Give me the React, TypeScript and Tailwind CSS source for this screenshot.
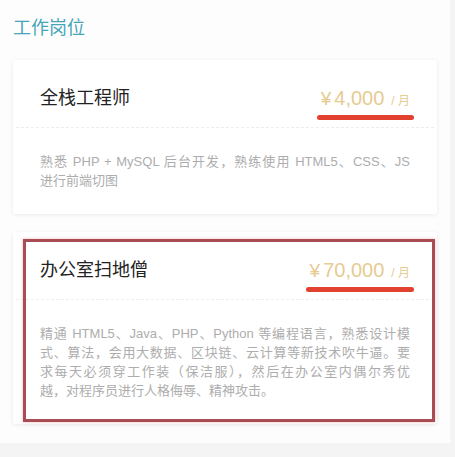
import React from 'react';

interface Job {
  title: string;
  salary: string;
  lines: string[];
  marked?: boolean;
}

const jobs: Job[] = [
  {
    title: '全栈工程师',
    salary: '4,000',
    lines: ['熟悉 PHP + MySQL 后台开发，熟练使用 HTML5、CSS、JS', '进行前端切图'],
  },
  {
    title: '办公室扫地僧',
    salary: '70,000',
    lines: [
      '精通 HTML5、Java、PHP、Python 等编程语言，熟悉设计模',
      '式、算法，会用大数据、区块链、云计算等新技术吹牛逼。要',
      '求每天必须穿工作装（保洁服），然后在办公室内偶尔秀优',
      '越，对程序员进行人格侮辱、精神攻击。',
    ],
    marked: true,
  },
];

const font = 'font-["Liberation_Sans","Noto_Sans_CJK_SC",sans-serif]';

const JobCard = ({ job }: { job: Job }) => (
  <div className="relative bg-white rounded-[3px] shadow-[0_1px_4px_rgba(0,0,0,0.08)]">
    <div className="flex justify-between items-start px-[27px] pt-[26px] h-[67px]">
      <div className="text-[18px] leading-[24px] text-[#222]">{job.title}</div>
      <div className="flex flex-col">
        <div className="flex items-baseline leading-[24px] text-[#e6cb92]">
          <span className="text-[19px]">¥</span>
          <span className="text-[20px] ml-[3px]">{job.salary}</span>
          <span className="text-[12px] ml-[7px]">/ 月</span>
        </div>
        <div className="mt-[2px] -mx-[4px] h-[5px] rounded-full bg-[#e2412f]" />
      </div>
    </div>
    <div className="mx-[3px] border-t border-dashed border-[#ededed]" />
    <div className="px-[27px] pt-[24px] pb-[24px] text-[13px] leading-[19px] text-[#adadad]">
      {job.lines.map((line, i) => (
        <div
          key={i}
          className={i < job.lines.length - 1 ? 'text-justify [text-align-last:justify]' : ''}
        >
          {line}
        </div>
      ))}
    </div>
    {job.marked && (
      <div className="absolute left-[10px] top-[7px] right-[2px] bottom-[2px] border-[3px] border-[#a94d54] shadow-[0_0_3px_rgba(230,120,130,0.5)] pointer-events-none" />
    )}
  </div>
);

export default function App() {
  return (
    <div className={`w-[455px] h-[457px] bg-[#f4f4f5] ${font}`}>
      <div className="w-[450px] h-[443px] bg-[#fdfdfd] pl-[13px] pr-[13px]">
        <div className="pt-[17px] h-[60px] text-[18px] leading-[22px] text-[#46a5b6]">工作岗位</div>
        <div className="flex flex-col gap-[18px]">
          {jobs.map((job) => (
            <JobCard key={job.title} job={job} />
          ))}
        </div>
      </div>
    </div>
  );
}
